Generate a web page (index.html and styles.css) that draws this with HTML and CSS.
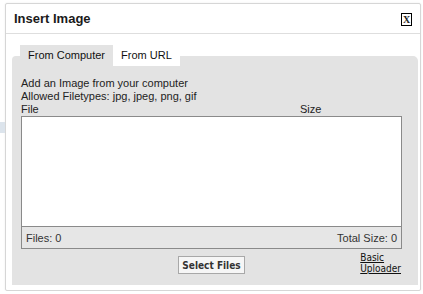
FILE: index.html
```html
<!DOCTYPE html>
<html lang="en">
<head>
    <meta charset="UTF-8">
    <title>Insert Image</title>
    <link rel="stylesheet" href="styles.css">
</head>
<body>
    <div class="backdrop-strip"></div>
    <article class="dialog">
        <header class="dialogTitle">
            <span class="titleText">Insert Image</span>
            <span class="closeBox">X</span>
        </header>
        <section class="dialogBody">
            <div class="panel">
                <nav class="tabs">
                    <span class="tab tabActive">From Computer</span>
                    <span class="tab">From URL</span>
                </nav>
                <p class="intro">Add an Image from your computer<br>Allowed Filetypes: jpg, jpeg, png, gif</p>
                <div class="listHead">
                    <span class="colFile">File</span>
                    <span class="colSize">Size</span>
                </div>
                <div class="fileList">
                    <div class="fileRows"></div>
                    <div class="fileFooter">
                        <span>Files: 0</span>
                        <span>Total Size: 0</span>
                    </div>
                </div>
                <div class="actions">
                    <span></span>
                    <button class="selectBtn">Select Files</button>
                    <a class="basicLink" href="#">Basic<br>Uploader</a>
                </div>
            </div>
        </section>
    </article>
</body>
</html>
```

FILE: styles.css
```css
body {
    margin: 0;
    background-color: #fff;
    font-family: "Liberation Sans", Arial, sans-serif;
    font-size: 11px;
    color: #222;
}

.dialog {
    margin: 3px 2px 0 5px;
    width: 414px;
    height: 286px;
    border: 1px solid #d6d6d6;
    border-radius: 2px;
    background-color: #fff;
    box-shadow: 0 0 2px rgba(0, 0, 0, 0.08);
    display: flex;
    flex-direction: column;
}

.dialogTitle {
    height: 29px;
    border-bottom: 1px solid #dedede;
    display: flex;
    align-items: center;
    justify-content: space-between;
    padding: 0 8px 0 8px;
}
.titleText {
    font-size: 13px;
    font-weight: bold;
    color: #1a1a1a;
}
.closeBox {
    width: 9px;
    height: 11px;
    border: 1px solid #000;
    font-family: "Liberation Serif", serif;
    font-weight: bold;
    font-size: 10px;
    line-height: 11px;
    text-align: center;
    margin-top: 1px;
}

.dialogBody {
    padding: 22px 2px 0 6px;
}

.panel {
    display: flow-root;
    background-color: #e3e3e3;
    border-radius: 4px 5px 0 0;
    height: 229px;
    padding: 0 16px 0 9px;
}

.tabs {
    display: flex;
    margin: -11px 0 0 -1px;
    height: 21px;
}
.tab {
    padding: 0 8px;
    line-height: 20px;
    font-size: 11px;
    background-color: #fff;
    color: #111;
}
.tabActive {
    background-color: #e3e3e3;
}

.intro {
    margin: 11px 0 0 0;
    line-height: 13px;
}

.listHead {
    display: flex;
    line-height: 13px;
}
.colFile {
    flex: 1;
}
.colSize {
    width: 102px;
}

.fileList {
    height: 131px;
    border: 1px solid #8a8a8a;
    background-color: #fff;
    display: flex;
    flex-direction: column;
}
.fileRows {
    flex: 1;
}
.fileFooter {
    height: 21px;
    border-top: 1px solid #8a8a8a;
    background-color: #e6e6e6;
    display: flex;
    justify-content: space-between;
    align-items: center;
    padding: 0 4px;
    color: #333;
}

.actions {
    display: grid;
    grid-template-columns: 1fr auto 1fr;
    align-items: end;
    margin-top: 3px;
}
.selectBtn {
    height: 18px;
    padding: 0 3px;
    border: 1px solid #a8a8a8;
    background-color: #f6f6f6;
    font-family: "DejaVu Sans Condensed", "DejaVu Sans", sans-serif;
    font-stretch: condensed;
    font-weight: bold;
    font-size: 10px;
    color: #333;
    border-radius: 0;
}
.basicLink {
    justify-self: end;
    font-family: "DejaVu Sans Condensed", "DejaVu Sans", sans-serif;
    font-stretch: condensed;
    font-size: 10px;
    line-height: 11px;
    color: #111;
    text-decoration: underline;
    margin-right: 1px;
}

.backdrop-strip {
    position: absolute;
    left: 0;
    top: 122px;
    width: 5px;
    height: 11px;
    background-color: #dce4ec;
}
```
